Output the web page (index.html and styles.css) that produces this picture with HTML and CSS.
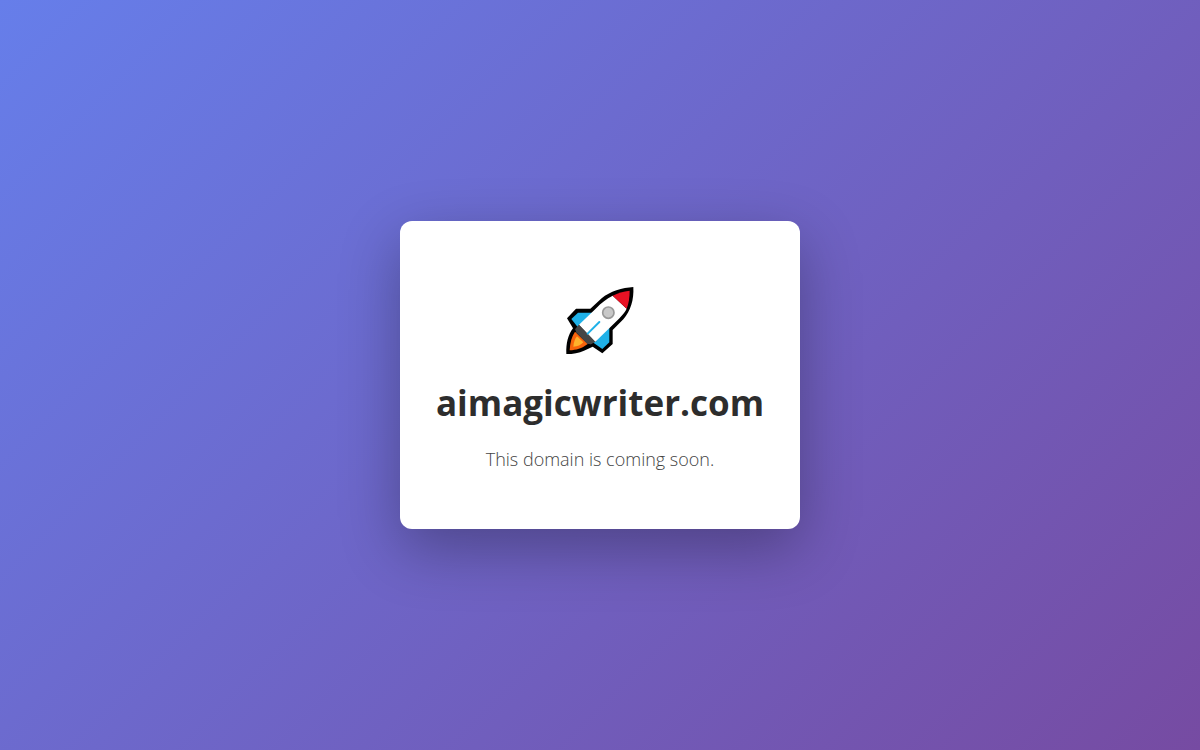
FILE: index.html
```html
<!DOCTYPE html>
<html lang="en">
<head>
    <meta charset="UTF-8">
    <meta name="viewport" content="width=device-width, initial-scale=1.0">
    <title>aimagicwriter.com</title>
    <link rel="stylesheet" href="styles.css">
</head>
<body>
    <main class="container">
        <svg class="icon" viewBox="0 3 240 240" role="img" aria-label="Rocket">
            <path d="M220 21C187 23 150 34 125 55L91 86H48L21 115L39 145C24 165 18 190 19 222C40 222 57 219 72 212L98 200L127 220L158 192V150L190 118C212 92 222 60 220 21Z" fill="#000"/>
            <path d="M54 98H98L110 110L60 150L34 117Z" fill="#1fb1e8"/>
            <path d="M148 140V187L127 207L96 185Z" fill="#1fb1e8"/>
            <path d="M58 132L46 147L49 157L82 191L93 193L110 183L80 140Z" fill="#454545"/>
            <path d="M158 47C139 56 125 68 107 86L57 134L106 185L177 116C189 103 196 95 200 86Z" fill="#fff"/>
            <path d="M209 32C190 34 173 39 158 47L200 86C206 71 209 53 209 32Z" fill="#e81224"/>
            <path d="M45 155C35 170 30 188 29 211C48 210 65 206 83 192Z" fill="#f7630c"/>
            <path d="M51 169C44 178 41 188 40 200C53 200 63 195 70 187Z" fill="#ffb12b"/>
            <path d="M58 136L46 148L49 157L82 191L93 193L103 183Z" fill="#454545"/>
            <path d="M83 161L118 126" stroke="#1fb1e8" stroke-width="6" stroke-linecap="round"/>
            <circle cx="145" cy="98" r="17" fill="#c8c8c8" stroke="#999" stroke-width="5"/>
        </svg>
        <h1>aimagicwriter.com</h1>
        <p>This domain is coming soon.</p>
    </main>
</body>
</html>
```
FILE: styles.css
```css
* {
    margin: 0;
    padding: 0;
    box-sizing: border-box;
}
body {
    font-family: "Segoe UI", "Open Sans", "Noto Sans", sans-serif;
    background: linear-gradient(135deg, #667eea 0%, #764ba2 100%);
    min-height: 100vh;
    display: flex;
    align-items: center;
    justify-content: center;
}
.container {
    width: 90%;
    max-width: 400px;
    padding: 60px 32px 56px;
    background: #fff;
    border-radius: 12px;
    box-shadow: 0 20px 60px rgba(0, 0, 0, 0.3);
    text-align: center;
}
.icon {
    display: block;
    width: 80px;
    height: 80px;
    margin: 0 auto 20px;
}
h1 {
    font-size: 35px;
    line-height: 44px;
    margin-bottom: 20px;
    color: #2d2d2d;
}
p {
    font-size: 18px;
    font-weight: 300;
    line-height: 28px;
    color: #444;
}
```
